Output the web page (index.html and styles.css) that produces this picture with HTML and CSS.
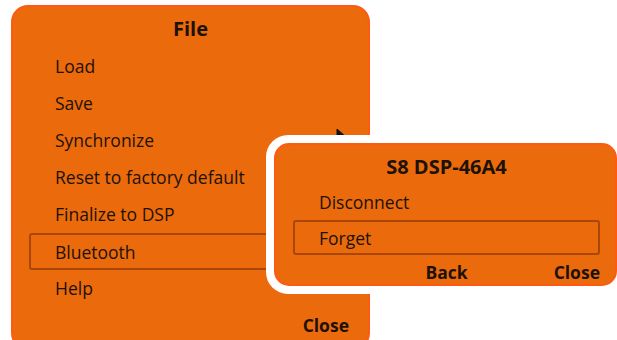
FILE: index.html
```html
<!DOCTYPE html>
<html lang="en">
<head>
    <meta charset="UTF-8">
    <meta name="viewport" content="width=device-width, initial-scale=1.0">
    <title>File menu</title>
    <link rel="stylesheet" href="styles.css">
</head>
<body>
    <div class="screen">
        <div class="menu">
            <div class="menu-title">File</div>
            <div class="menu-item">Load</div>
            <div class="menu-item">Save</div>
            <div class="menu-item">Synchronize</div>
            <div class="menu-item">Reset to factory default</div>
            <div class="menu-item">Finalize to DSP</div>
            <div class="menu-item selected">Bluetooth</div>
            <div class="menu-item">Help</div>
            <div class="menu-footer">
                <span class="menu-btn">Close</span>
            </div>
        </div>

        <!-- mouse pointer, mostly hidden behind the popup -->
        <svg class="cursor" width="12" height="16" viewBox="0 0 12 16">
            <path d="M1 1 L1 13 L4 10 L6 15 L8 14 L6 9 L10 9 Z" fill="#111" stroke="#111" stroke-width="1"/>
        </svg>

        <div class="popup">
            <div class="popup-panel">
                <div class="popup-title">S8 DSP-46A4</div>
                <div class="popup-item">Disconnect</div>
                <div class="popup-item selected">Forget</div>
                <div class="popup-footer">
                    <span></span>
                    <span class="menu-btn">Back</span>
                    <span class="menu-btn right">Close</span>
                </div>
            </div>
        </div>
    </div>
</body>
</html>
```

FILE: styles.css
```css
body {
    margin: 0;
    background: #fff;
    font-family: "Open Sans", "Noto Sans", sans-serif;
    color: #1c1208;
    overflow: hidden;
}
.screen {
    position: relative;
    width: 617px;
    height: 340px;
    padding: 5px 0 0 11px;
    box-sizing: border-box;
}
.menu {
    width: 359px;
    height: 345px;
    background: #eb6a0c;
    border: 2px solid #ff5a14;
    border-radius: 17px;
    box-sizing: border-box;
    padding: 0 16px;
}
.menu-title {
    height: 41px;
    line-height: 43px;
    text-align: center;
    font-weight: 700;
    font-size: 20px;
}
.menu-item {
    height: 37px;
    line-height: 35px;
    font-size: 17.5px;
    padding-left: 25px;
    border: 1px solid transparent;
    border-radius: 3px;
    box-sizing: border-box;
}
.menu-item.selected {
    border: 2px solid #a9460a;
    padding-left: 24px;
}
.menu-footer {
    height: 36px;
    display: flex;
    justify-content: flex-end;
    align-items: center;
    padding-right: 3px;
}
.menu-btn {
    font-weight: 700;
    font-size: 17.5px;
}
.cursor {
    position: absolute;
    left: 336px;
    top: 128px;
}
.popup {
    position: absolute;
    left: 266px;
    top: 135px;
    width: 359px;
    height: 159px;
    box-sizing: border-box;
    background: #fff;
    border-radius: 22px;
    padding: 8px;
}
.popup-panel {
    height: 100%;
    background: #eb6a0c;
    border: 2px solid #ff5a14;
    border-radius: 15px;
    box-sizing: border-box;
    padding: 0 15px 0 17px;
}
.popup-title {
    height: 40px;
    line-height: 44px;
    text-align: center;
    font-weight: 700;
    font-size: 20px;
}
.popup-item {
    height: 35px;
    line-height: 33px;
    font-size: 17.5px;
    padding-left: 25px;
    border: 1px solid transparent;
    border-radius: 3px;
    box-sizing: border-box;
}
.popup-item.selected {
    border: 2px solid #a9460a;
    padding-left: 24px;
}
.popup-footer {
    display: grid;
    grid-template-columns: 1fr auto 1fr;
    align-items: center;
    height: 30px;
    padding-top: 2px;
}
.popup-footer .right {
    justify-self: end;
}
```
